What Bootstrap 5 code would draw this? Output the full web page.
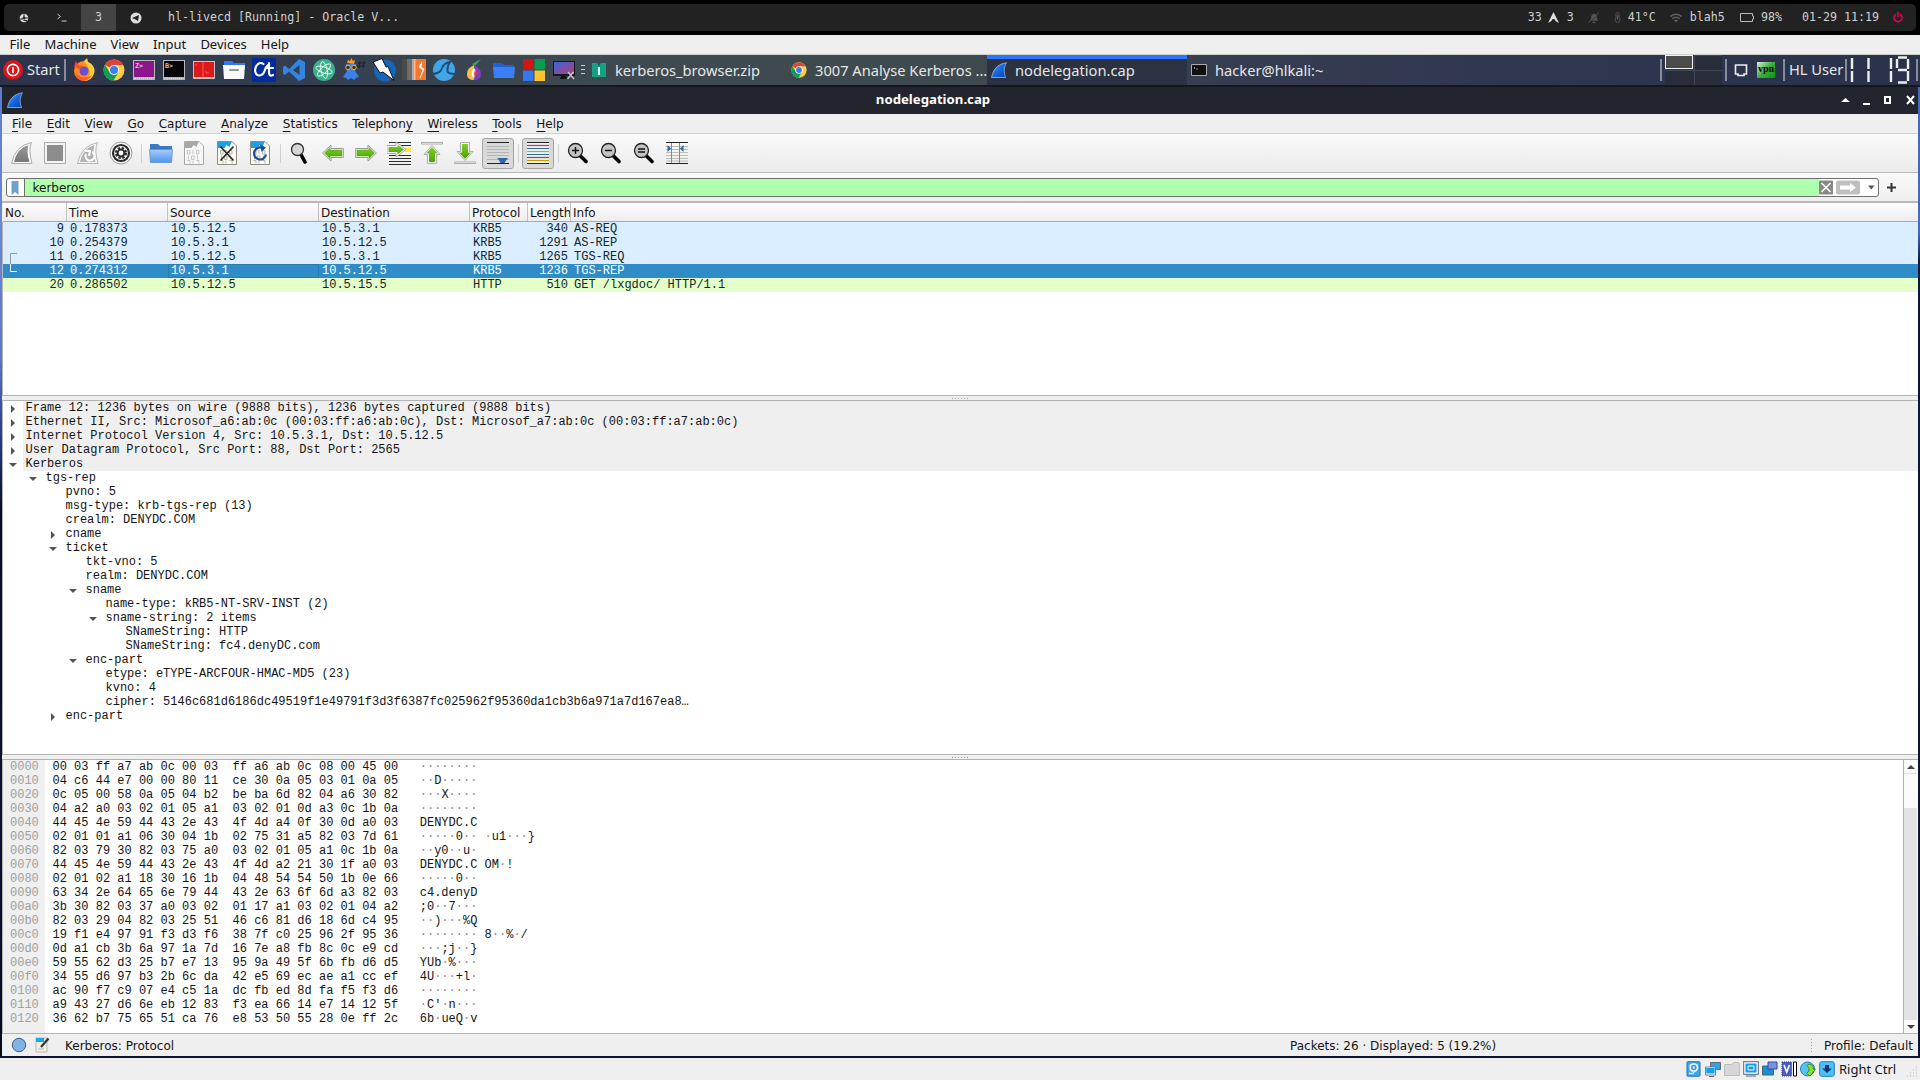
<!DOCTYPE html>
<html lang="en">
<head>
<meta charset="utf-8">
<title>nodelegation.cap</title>
<link rel="stylesheet" href="https://cdn.jsdelivr.net/npm/bootstrap@5.3.0/dist/css/bootstrap.min.css">
<style>
body{width:1920px;height:1080px;overflow:hidden;background:#efefef;color:#141414;font-family:"DejaVu Sans",sans-serif;font-size:12px;line-height:14px}
svg{display:block;flex:none}
.host-bar{height:35px;background:#000;padding:4px 4px;font:11.65px/27px "DejaVu Sans Mono",monospace;color:#d0d0d0}
.host-inner{background:#222;height:27px;border-radius:5px;white-space:pre}
.ws{width:39px;height:27px;flex:none}
.ws-term{width:38px}
.ws-on{background:#444;width:35px}
.vb-menu{height:20px;border-bottom:1px solid #ccd0cc;background:#efefef;font:13px/19px "Noto Sans",sans-serif;padding-left:9.5px}
.vb-menu span{margin-right:14.1px}
.taskbar{height:30px;background:linear-gradient(90deg,#2c334b 0,#333d50 14%,#3e4a50 32%,#3f4a4e 50%,#363d50 64%,#2f3750 80%,#29314b 100%);font:14.67px/28px "Noto Sans",sans-serif;color:#e6e6e6}
.task{width:200px;height:30px;padding:0 0 1px 4px;white-space:pre}
.task svg{margin-right:8px}
.task-on{background:#2b3242;box-shadow:inset 0 4px #2777ff}
.tlabel{padding-bottom:2px}
.vsep{width:2px;height:22px;background:#858b97;flex:none}
.pager{width:57px;height:30px;display:grid;grid-template-columns:29px 28px;grid-template-rows:15px 15px;gap:0}
.pager i{background:#292d3a;border-left:1px solid #41475a;border-top:1px solid #41475a}
.pager i.cur{background:#4b4b4b;border:1px solid #f2f2ee;height:14px;width:28px}
.pager i:nth-child(3){border-left:0}
.vpn{width:18px;height:16px;background:linear-gradient(135deg,#d9f0d9,#3eae3e 50%,#069806);color:#000;font:bold 10px/14px "Liberation Serif",serif}
.frame-l{width:2px;background:linear-gradient(#5a7bd0 0,#6a88d2 14%,#5a77c4 28%,#2a4590 35%,#040b24 44%,#0a1330 75%,#040a1c)}
.frame-r{width:2px;background:linear-gradient(#4568c0 0,#4568c0 15%,#0c1740 18%,#0a1330)}
.win{height:971px;border-top:2px solid #15171c}
.win-title{height:27px;background:#23252e;color:#fff;font:bold 13.2px/25px "Noto Sans",sans-serif;padding-bottom:2px}
.w-menu{height:20px;line-height:20px;border-bottom:1px solid #d2d2d2;padding-left:10px}
.w-menu span{margin-right:14.55px}
.w-menu u{text-underline-offset:3px}
.tools{height:39px;background:linear-gradient(#fafafa,#ebebeb);border-bottom:1px solid #b8b8b8;padding-left:4px}
.tb{width:33px;height:32px;flex:none;padding-right:1px}
.tb-on{background:#d9d9d9;border:1px solid #a5a5a5;border-radius:3px;width:32px;height:31px;margin-right:1px;padding:0}
.tsep{width:7px;height:19px;flex:none;background:linear-gradient(#cfcfcf,#cfcfcf) 3px 0/1px 19px no-repeat}
.filter{height:30px;background:linear-gradient(#fafafa,#efefef);border-bottom:2px solid #b9b9b9;padding:5px 0 4px 4px}
.fbox{width:1873px;height:19px;border:1px solid #6f6f6f;border-radius:3px;background:#fff;overflow:hidden}
.fgreen{background:#afffaf;border-left:1px solid #6f6f6f;height:17px;line-height:18px;padding-left:7.5px;width:1795px;margin-left:17px}
.cols{display:flex;padding-left:1px}
.cols>*{flex:none;padding:0 3px;overflow:hidden;white-space:pre}
.cols>:nth-child(1){width:63px}.cols>:nth-child(2){width:101px}.cols>:nth-child(3),.cols>:nth-child(4){width:151px}
.cols>:nth-child(5){width:58px}.cols>:nth-child(6){width:43px}.cols>:nth-child(7){flex:1}
.chead{height:19px;line-height:20px;background:linear-gradient(#fdfdfd,#ededed);border-bottom:1px solid #a9a9a9}
.chead>*{border-right:1px solid #c2c2c2;padding:0 0 0 2px}
.chead>:nth-child(1){width:64px}.chead>:nth-child(7){border:0}.cols.chead{padding-left:0;margin-left:1px}
.mono,.pkt{font-family:"Liberation Mono",monospace;font-size:12px;line-height:14px}
.pkt{height:14px;background:#daeeff;color:#12272e;padding-left:0}
.pkt>:nth-child(1),.pkt>:nth-child(6){text-align:right}
.pkt>:nth-child(1){width:64px;position:relative}
.pkt.sel{background:#308cc6;color:#fff}.pkt.http{background:#e4ffc7}
.pkt.sel>:nth-child(3){box-shadow:inset 0 0 0 1px #2a7cb0}
.list{height:173px;border-left:1px solid #b5b5b5;background:#fff}
.split{border-top:1px solid #b4b4b4;border-bottom:1px solid #b4b4b4;height:6px;background:#efefef}
.split i{width:16px;height:1px;background:repeating-linear-gradient(90deg,#aaa 0 1px,transparent 1px 3px)}
.tree{height:353px;background:#fff;border-left:1px solid #b5b5b5}
.nd{height:14px}
.nd b{width:20px;height:14px;flex:none;display:flex;align-items:center;justify-content:center}
.nd b.c::before{content:"";border:4px solid transparent;border-left:4px solid #555;border-right:0;margin-top:1px}
.nd b.o::before{content:"";border:4px solid transparent;border-top:4px solid #555;border-bottom:0;margin-top:2px}
.nd span{padding-left:2.5px;flex:1;white-space:nowrap}
.nd.top span{background:#efefef}
.d1{padding-left:20px}.d2{padding-left:40px}.d3{padding-left:60px}.d4{padding-left:80px}.d5{padding-left:100px}
.hex{height:273px;background:#fff;border-left:1px solid #b5b5b5}
.offs{width:42px;background:#efefef;color:#a0a0a0;padding-left:7px;white-space:pre}
.bytes{padding-left:7.5px;color:#141414;white-space:pre}.bytes em{font-style:normal;color:#8c8c8c}
.sb{width:14px;border-left:1px solid #b4b4b4;background:#e3e3e3}
.sb-b{height:14px;background:#fbfbfb}
.status{height:23px;border-top:1px solid #b4b4b4;line-height:22px}
.status span{padding-top:1px}
.dotsep{width:1px;height:13px;background:repeating-linear-gradient(#aaa 0 1px,transparent 1px 3px)}
.vb-status{height:24px;border-top:2px solid #0a142c;font:13px/22px "Noto Sans",sans-serif;padding:0 2px 0 1684px}
</style>
<script src="https://cdn.jsdelivr.net/npm/bootstrap@5.3.0/dist/js/bootstrap.bundle.min.js"></script>
</head>
<body>
<svg width="0" height="0" class="position-absolute">
<defs>
<linearGradient id="gf" x1="0" y1="0" x2="1" y2="1"><stop offset="0" stop-color="#6db0ff"/><stop offset=".5" stop-color="#1668e0"/><stop offset="1" stop-color="#0b3fae"/></linearGradient>
<linearGradient id="gg" x1="0" y1="0" x2="0" y2="1"><stop offset="0" stop-color="#7fd02a"/><stop offset="1" stop-color="#4ba300"/></linearGradient>
<linearGradient id="gs" x1="0" y1="0" x2="0" y2="1"><stop offset="0" stop-color="#9a9a9a"/><stop offset="1" stop-color="#777"/></linearGradient>
<linearGradient id="go" x1="0" y1="0" x2="0" y2="1"><stop offset="0" stop-color="#a9cdf8"/><stop offset="1" stop-color="#4f94ee"/></linearGradient>
<linearGradient id="gm" x1="0" y1="0" x2="1" y2="1"><stop offset="0" stop-color="#3d63d8"/><stop offset="1" stop-color="#b0407a"/></linearGradient>
<symbol id="fin" viewBox="0 0 16 16"><path d="M.5 15.5C2 8 6 2 15.5.8 12.800 5 12.600 10 14.500 15.500Z" fill="url(#gf)" stroke="#9fb6d6" stroke-width=".8"/></symbol>
<symbol id="chrome" viewBox="0 0 22 22"><circle cx="11" cy="11" r="10.500" fill="#fc4"/><path d="M11 11 1.900 5.800A10.500 10.500 0 0 1 20.200 6H11Z" fill="#dc4437"/><path d="M1.900 5.700A10.500 10.500 0 0 0 10.500 21.500L15.300 13.500 6.700 13.500Z" fill="#109d58"/><circle cx="11" cy="11" r="5" fill="#fff"/><circle cx="11" cy="11" r="4" fill="#3b7ded"/></symbol>
<symbol id="lens" viewBox="0 0 22 22"><path d="m12.500 13 6.500 6.500" stroke="#000" stroke-width="3.600" stroke-linecap="round"/><circle cx="8.500" cy="8.500" r="7" fill="#c4c4c4" stroke="#222" stroke-width="1.300"/></symbol>
<symbol id="arr" viewBox="0 0 22 22"><path d="M.6 11 9 3V6.500H21.300V15.500H9V19Z" fill="#fff" stroke="#999" stroke-width="1"/><path d="M2.500 11 8 5.500V8H20V14H8V16.500Z" fill="url(#gg)" stroke="#57a312" stroke-width=".6"/></symbol>
<symbol id="doc" viewBox="0 0 20 24"><path d="M.5.5H15L19.500 5V23.500H.5Z" fill="#fcfbef" stroke="#8b8b84"/><path d="M1 1h13.500l-2 5-3-2-2 3H1Z" fill="#1f9fe0"/><path d="M3.500 9.500h2.500v3.500H3.500zM9 9v4M12.500 9.500h2.500v3.500h-2.500zM4.500 14.500v4M7.500 15h2.500v3.500H7.500zM13.500 14.500v4M3.500 19.500h2.500v3M9 19.500v3M12.500 19.500h2.500v3" fill="none" stroke="#b5b5ab"/></symbol>
</defs>
</svg>

<!-- host status bar -->
<header class="host-bar"><div class="host-inner d-flex align-items-center">
<div class="ws d-flex align-items-center justify-content-center"><svg width="10" height="10" viewBox="0 0 10 10"><circle cx="5" cy="5" r="4.300" fill="#ddd"/><path d="M1 6h3M5 1v4H9M4.500 7.500H8" stroke="#222" fill="none"/><circle cx="5" cy="5" r="1.500" fill="#222"/></svg></div>
<div class="ws ws-term d-flex align-items-center justify-content-center"><svg width="12" height="9" viewBox="0 0 12 9"><path d="m1.500 1 3 2.500-3 2.500M5.500 8h5" stroke="#ccc" fill="none"/></svg></div>
<div class="ws ws-on text-center">3</div>
<div class="ws d-flex align-items-center justify-content-center"><svg width="12" height="12" viewBox="0 0 12 12"><circle cx="6" cy="6" r="5.500" fill="#ddd"/><path d="M2 6 9 3 8 9 5.500 7.500Z" fill="#222"/></svg></div>
<span class="flex-grow-1" style="padding-left:13px">hl-livecd [Running] - Oracle V...</span>
<span>33</span><svg style="margin:0 8px 0 6px" width="11" height="11" viewBox="0 0 11 11"><path d="M5.500 0 11 11 7.500 9A2 2 0 0 0 3.500 9L0 11Z" fill="#ddd"/></svg><span>3</span>
<svg style="margin-left:14px" width="12" height="12" viewBox="0 0 13 12"><path d="M2 9 3.500 6.500Q3 2 6.500 1.500 10 2 9.500 6.500L11 9ZM5 10h3v1.500H5Z" fill="#555"/><path d="M1 11.500 12.500.500" stroke="#222"/><path d="M.500 11 12 0" stroke="#5c5c5c"/></svg>
<svg style="margin-left:14px" width="7" height="11" viewBox="0 0 7 11"><path d="M2 6V2a1.500 1.500 0 0 1 3 0V6a2.500 2.500 0 1 1-3 0ZM3.500 3V8" fill="none" stroke="#555"/></svg><span style="margin-left:7px">41°C</span>
<svg style="margin-left:14px" width="12" height="10" viewBox="0 0 12 10"><path d="M.500 3.500q5.500-4.500 11 0M2.300 5.700q3.700-3 7.400 0" fill="none" stroke="#606060" stroke-width="1.400"/><path d="M4 7.300q2-1.300 4 0L6 9.500Z" fill="#606060"/></svg><span style="margin-left:8px">blah5</span>
<svg style="margin-left:15px" width="14" height="9" viewBox="0 0 14 9"><path d="M.500.500H12.500V3H13.500V6H12.500V8.500H.500Z" fill="none" stroke="#bbb"/></svg><span style="margin-left:7px">98%</span>
<span style="margin-left:20px">01-29 11:19</span>
<svg style="margin:0 13px 0 14px" width="10" height="11" viewBox="0 0 10 11"><path d="M3 2.200a4 4 0 1 0 4 0M5 0V5" fill="none" stroke="#e6005c" stroke-width="1.500"/></svg>
</div></header>

<nav class="vb-menu d-flex"><span>File</span><span>Machine</span><span>View</span><span>Input</span><span>Devices</span><span>Help</span></nav>

<!-- guest panel -->
<div class="taskbar d-flex align-items-center">
<svg style="margin:0 4px 0 3px" width="20" height="20" viewBox="0 0 20 20"><circle cx="10" cy="10" r="10" fill="#d8161b"/><circle cx="10" cy="10" r="5.600" fill="none" stroke="#fff" stroke-width="1.600"/><path d="M10 7v6" stroke="#fff" stroke-width="1.600"/></svg><span class="tlabel" style="width:37px">Start</span><i class="vsep"></i>
<div class="d-flex align-items-center" style="margin-left:6px;gap:6px;width:508px">
<svg width="24" height="24" viewBox="0 0 24 24"><circle cx="12" cy="13" r="10" fill="#ff8a1e"/><path d="M12 3 15 0l1 4q7 3 6.500 10Q20 23 12 23q9-6 4-14Z" fill="#ffcf3b"/><path d="M2 9 4 3l2 4 5 1-3 3Z" fill="#ff4a3b"/><circle cx="12" cy="13" r="4.500" fill="#6a4fd0"/><path d="M3 15q8 8 17 2-4 6-9 6-6-1-8-8Z" fill="#ff5a2e"/></svg>
<svg width="24" height="24" viewBox="0 0 24 24"><use href="#chrome" x="1" y="1" width="22" height="22"/></svg>
<svg width="24" height="24" viewBox="0 0 24 24"><path d="M1 2h22v20H1z" fill="#b8b8b8"/><path d="M2 3h20v16H2z" fill="#8b168b"/><path d="M3 20.500h18" stroke="#ddd" stroke-dasharray="1 1"/><text x="3" y="10" font-size="6.500" fill="#fff" font-family="DejaVu Sans Mono">Z&gt;</text></svg>
<svg width="24" height="24" viewBox="0 0 24 24"><path d="M1 2h22v20H1z" fill="#b8b8b8"/><path d="M2 3h20v16H2z" fill="#05050a"/><path d="M3 20.500h18" stroke="#ddd" stroke-dasharray="1 1"/><text x="3" y="10" font-size="6.500" fill="#fff" font-family="DejaVu Sans Mono">B&gt;</text></svg>
<svg width="24" height="24" viewBox="0 0 24 24"><path d="M1 3h22v18H1z" fill="#c9c0bd"/><path d="M2 4h20v15H2z" fill="#dc1a1c"/><path d="M4 6v2M14 13v2h3M11 4v15" stroke="#ff7770" stroke-width=".7" fill="none"/></svg>
<svg width="24" height="24" viewBox="0 0 24 24"><path d="M2 3h8l2 2h11v6H2z" fill="#3478f0"/><path d="M1 7h22l-1 14H2z" fill="#fafafa"/><path d="M8 12h8" stroke="#999" stroke-width="2" stroke-linecap="round"/></svg>
<svg width="24" height="24" viewBox="0 0 24 24"><path d="M0 0h24v24H0z" fill="#002b9c"/><path d="M11.500 6Q9 4 6 6 3 8.500 3 12.500 3.500 17 7 17.500 11 17.500 12.500 13 13.500 9 16 7M17 5V15q.500 4 4 2M14 10h7" fill="none" stroke="#fff" stroke-width="2.200" stroke-linecap="round"/></svg>
<svg width="24" height="24" viewBox="0 0 24 24"><path d="M17 1 23 4V20L17 23 7 13.500 3 17 1 15.500V9L3 7.500 7 11ZM17.500 7 11 12l6.500 5Z" fill="#3583e0" fill-rule="evenodd"/></svg>
<svg width="24" height="24" viewBox="0 0 24 24"><circle cx="12" cy="12" r="11" fill="#3fae8a"/><g fill="none" stroke="#e8fff6" stroke-width=".9"><ellipse cx="12" cy="12" rx="3" ry="8.500" transform="rotate(-12 12 12)"/><ellipse cx="12" cy="12" rx="3" ry="8.500" transform="rotate(48 12 12)"/><ellipse cx="12" cy="12" rx="3" ry="8.500" transform="rotate(-72 12 12)"/></g></svg>
<svg width="24" height="24" viewBox="0 0 24 24"><path d="M5 5 6 2l2 1 1.500-3 1.500 3 2-1-1 4Z" fill="#ff9a1f"/><path d="M4 6h10l-1 7 4 6-3 1-2 2-3-2-3 2-2-2-3-1 4-6Z" fill="#3c7fe8"/><circle cx="6" cy="9.500" r="2.300" fill="#333" stroke="#f5b92a"/><circle cx="12" cy="9.500" r="2.300" fill="#333" stroke="#f5b92a"/><path d="m18 3-1 7M22 3l-1 7M16 5h8M15 8h8" stroke="#222"/></svg>
<svg width="24" height="24" viewBox="0 0 24 24"><circle cx="13" cy="12.500" r="11" fill="#1565b8"/><path d="M1 4 10 .500 14 9l2-.500 6 14L11 14 8 15Z" fill="#fff" stroke="#111"/></svg>
<svg width="24" height="24" viewBox="0 0 24 24"><path d="M0 1h11v21H0z" fill="#6e6e6e"/><path d="M0 1h5v21H0z" fill="#4b4b4b"/><path d="M13 1h11v21H13z" fill="#f27a2e"/><path d="M10 1h2v21h-2z" fill="#aaa"/><path d="M12 1h1.500v21H12z" fill="#fbb78a"/><path d="m20 4-3 5 4 3-3 8 4-9-3-2Z" fill="#fff" stroke="#fff" stroke-width=".6"/></svg>
<svg width="24" height="24" viewBox="0 0 24 24"><circle cx="12" cy="12" r="11" fill="#42a5e6"/><path d="M1 16Q9 15 10 10 12 5 18 4 15 8 15.500 13q.500 3 7.500 3" fill="none" stroke="#1c4d78" stroke-width="1.800"/></svg>
<svg width="24" height="24" viewBox="0 0 24 24"><path d="m13 8 6-7-9 5Z" fill="#27ae60"/><path d="M12 7Q5 10 5 16q0 6 7 6Z" fill="#f5c242"/><path d="M12 7q7 3 7 9 0 6-7 6Z" fill="#7a41b8"/><path d="M12 10q-3 3-2 8l2 2 2-7Z" fill="#fff"/><path d="m13 11 1 3 3 1-3 1-1 3-1-3Z" fill="#f33"/></svg>
<svg width="24" height="24" viewBox="0 0 24 24"><path d="M1 5h9l2 2h10v3H1z" fill="#2360d8"/><path d="M1 9h22l-1 11H2z" fill="#3a7ff5"/></svg>
<svg width="24" height="24" viewBox="0 0 24 24"><path d="M1 1h10.500v10.500H1z" fill="#d01717"/><path d="M12.500 1H23v10.500H12.500z" fill="#0a9d50"/><path d="M1 12.500h10.500V23H1z" fill="#3478f0"/><path d="M12.500 12.500H23V23H12.500z" fill="#ffc42b"/></svg>
<svg width="24" height="24" viewBox="0 0 24 24"><path d="M1 3h22v15H1z" fill="#15181f"/><path d="M2 4h20v12H2z" fill="url(#gm)"/><path d="M9 18h5l1 3H8z" fill="#111"/><path d="m16 14 6 7m-.500-7-6 7" stroke="#ccc" stroke-width="1.300"/></svg>
</div>
<svg width="7" height="12" viewBox="0 0 7 12"><path d="M1 1.500h4M1 5.500h4M1 9.500h4" stroke="#ccc"/></svg>
<div class="task d-flex align-items-center"><svg width="16" height="16" viewBox="0 0 16 16"><path d="M1 1h14v14H1z" fill="#16a085"/><path d="M6 1h4L8 5Z" fill="#0c6b58"/><path d="M8 5v8" stroke="#d9fff4" stroke-width="2"/></svg>kerberos_browser.zip</div>
<div class="task d-flex align-items-center"><svg width="16" height="16"><use href="#chrome" width="16" height="16"/></svg>3007 Analyse Kerberos ...</div>
<div class="task task-on d-flex align-items-center"><svg width="16" height="16"><use href="#fin" width="16" height="16"/></svg>nodelegation.cap</div>
<div class="task d-flex align-items-center flex-grow-1"><svg width="16" height="16" viewBox="0 0 16 16"><path d="M.500 2.500h15v11H.500z" fill="#111" stroke="#aaa"/><path d="m3 5 1 1-1 1M5 7h2" stroke="#aaa" stroke-width=".8" fill="none"/></svg>hacker@hlkali:~</div>
<i class="vsep" style="margin-right:3px"></i>
<div class="pager"><i class="cur"></i><i></i><i></i><i></i></div>
<i class="vsep" style="margin:0 7px 0 3px"></i>
<svg width="14" height="14" viewBox="0 0 14 14"><path d="M1.500 2H12.500V11H10V12.500H4V11H1.500Z" fill="none" stroke="#eee" stroke-width="1.600"/></svg>
<div class="vpn text-center" style="margin:0 8px 0 9px">vpn</div>
<i class="vsep" style="margin-right:4px"></i><span class="tlabel text-nowrap" style="width:56px">HL User</span><i class="vsep"></i>
<svg style="margin:0 5px 0 3px" width="61" height="28" viewBox="0 0 61 28"><g stroke="#eee" stroke-width="2.400"><path d="M2 2v11M2 15v11M18.500 2v11M18.500 15v11M41 2v11M41 15v11M47 3v9M58 3v10M58 15v10M48 1.500h9M48 14h9M48 26.500h9"/></g></svg>
<i class="vsep" style="margin-right:2px"></i>
</div>

<div class="win d-flex">
<div class="frame-l"></div>
<main class="flex-grow-1">
<div class="win-title d-flex align-items-center">
<svg style="margin-left:5px" width="16" height="16"><use href="#fin" width="16" height="16"/></svg><span class="flex-grow-1 text-center" style="padding-left:5px">nodelegation.cap</span>
<svg style="margin-right:2px" width="78" height="14" viewBox="0 0 78 14"><path d="m3 9 4.500-4L12 9Z" fill="#fff"/><path d="M25 11h7" stroke="#fff" stroke-width="2"/><path d="M47 4h5v6h-5z" fill="none" stroke="#fff" stroke-width="2"/><path d="m69 3 7 8m0-8-7 8" stroke="#fff" stroke-width="2"/></svg>
</div>
<nav class="w-menu d-flex"><span><u>F</u>ile</span><span><u>E</u>dit</span><span><u>V</u>iew</span><span><u>G</u>o</span><span><u>C</u>apture</span><span><u>A</u>nalyze</span><span><u>S</u>tatistics</span><span>Telephon<u>y</u></span><span><u>W</u>ireless</span><span><u>T</u>ools</span><span><u>H</u>elp</span></nav>

<div class="tools d-flex align-items-center">
<div class="tb d-flex align-items-center justify-content-center"><svg width="22" height="22" viewBox="0 0 22 22"><path d="M.500 21.500Q4 4 20.500.500 17 8 21 21.500Z" fill="#fff" stroke="#aaa"/><path d="M3 20Q6 6 17.500 3 15 9 18.500 20Z" fill="url(#gs)"/></svg></div>
<div class="tb d-flex align-items-center justify-content-center"><svg width="22" height="22" viewBox="0 0 22 22"><path d="M.500.500h21v21H.500z" fill="#f4f4f4" stroke="#aaa"/><path d="M3 3h16v16H3z" fill="#8c8c8c"/></svg></div>
<div class="tb d-flex align-items-center justify-content-center"><svg width="22" height="22" viewBox="0 0 22 22"><path d="M.500 21.500Q4 4 20.500.500 17 8 21 21.500Z" fill="#f6f6f6" stroke="#b5b5b5"/><path d="M3 20Q6 6 17.500 3 15 9 18.500 20Z" fill="#b2b2b2"/><path d="M9 12a4.500 4.500 0 1 0 6-2M8 9l5 0-1 5" fill="none" stroke="#fff" stroke-width="2"/></svg></div>
<div class="tb d-flex align-items-center justify-content-center"><svg width="24" height="24" viewBox="0 0 24 24"><circle cx="12" cy="12" r="11" fill="#f8f8f8" stroke="#999"/><circle cx="12" cy="12" r="8" fill="none" stroke="#2c2c2c" stroke-width="2.200"/><circle cx="12" cy="12" r="4.800" fill="none" stroke="#2c2c2c" stroke-width="2.600" stroke-dasharray="2.300 1.470"/><circle cx="12" cy="12" r="3.400" fill="none" stroke="#2c2c2c" stroke-width="2"/></svg></div>
<i class="tsep"></i>
<div class="tb d-flex align-items-center justify-content-center"><svg width="24" height="20" viewBox="0 0 24 20"><path d="M1 1h8l2 2h12v4H1z" fill="#3b78c8"/><path d="M.500 6.500h23L22.500 19.500H1.500z" fill="url(#go)" stroke="#5c90d8" stroke-width=".8"/></svg></div>
<div class="tb d-flex align-items-center justify-content-center"><svg width="20" height="24" style="filter:grayscale(1);opacity:.7"><use href="#doc" width="20" height="24"/></svg></div>
<div class="tb d-flex align-items-center justify-content-center"><svg width="20" height="24" viewBox="0 0 20 24"><use href="#doc" width="20" height="24"/><path d="m3.500 5.500 13 14m0-14-13 14" stroke="#2b2b2b" stroke-width="1.800"/></svg></div>
<div class="tb d-flex align-items-center justify-content-center"><svg width="20" height="24" viewBox="0 0 20 24"><use href="#doc" width="20" height="24"/><path d="M12 6.800a6 6 0 1 0 4 6.700" fill="none" stroke="#1d4f96" stroke-width="2.200"/><path d="m10 3.500 6 3-4.500 4.500Z" fill="#1d4f96"/></svg></div>
<i class="tsep"></i>
<div class="tb d-flex align-items-center justify-content-center"><svg width="22" height="22" viewBox="0 0 22 22"><path d="m12.500 13.500 3.500 6.500" stroke="#000" stroke-width="3.600" stroke-linecap="round"/><circle cx="8.500" cy="7.500" r="6" fill="#d6d6d6" stroke="#333" stroke-width="1.300"/></svg></div>
<div class="tb d-flex align-items-center justify-content-center"><svg width="22" height="22"><use href="#arr" width="22" height="22"/></svg></div>
<div class="tb d-flex align-items-center justify-content-center"><svg width="22" height="22" viewBox="0 0 22 22"><use href="#arr" width="22" height="22" transform="matrix(-1 0 0 1 22 0)"/></svg></div>
<div class="tb d-flex align-items-center justify-content-center"><svg width="24" height="24" viewBox="0 0 24 24"><path d="M2 1.500h22M2 4.500h22M2 14.500h22M2 17.500h22M2 20.500h22M2 23.500h22" stroke="#2d2f31" stroke-width="1.200"/><path d="M18 7h6v4h-6z" fill="#ffe14a"/><path d="M0 4.500h9V1l10 7.500L9 16V12.500H0Z" fill="#fff" stroke="#999" stroke-width=".8"/><path d="M1.500 6h9V3.500l6.500 5-6.500 5V11h-9Z" fill="url(#gg)"/></svg></div>
<div class="tb d-flex align-items-center justify-content-center"><svg width="22" height="22" viewBox="0 0 22 22"><path d="M.500.500h21v1.500H.500z" fill="#fff" stroke="#999" stroke-width=".8"/><path d="M11 3.500 3 12.500H6.500V21.500H15.500V12.500H19Z" fill="#fff" stroke="#999" stroke-width=".8"/><path d="M11 5 5 11.500H8V20H14V11.500H17Z" fill="url(#gg)"/></svg></div>
<div class="tb d-flex align-items-center justify-content-center"><svg width="22" height="22" viewBox="0 0 22 22"><path d="M.500 20h21v1.500H.500z" fill="#fff" stroke="#999" stroke-width=".8"/><path d="M11 18.500 3 9.500H6.500V.500H15.500V9.500H19Z" fill="#fff" stroke="#999" stroke-width=".8"/><path d="M11 17 5 10.500H8V2H14V10.500H17Z" fill="url(#gg)"/></svg></div>
<div class="tb tb-on d-flex align-items-center justify-content-center"><svg width="22" height="22" viewBox="0 0 22 22"><path d="M0 .500h22M0 21.500h22" stroke="#222"/><path d="M0 4.500h22M0 7.500h22M0 10.500h22M0 13.500h22M0 17.500h22" stroke="#b3b5b1"/><path d="M10 16h11q-2 2-3.500 5h-4q-1-3-3.500-5" fill="#3465a4"/></svg></div>
<i class="tsep"></i>
<div class="tb tb-on d-flex align-items-center justify-content-center"><svg width="22" height="22" viewBox="0 0 22 22"><path d="M0 0h22v22H0z" fill="#f0f0f0"/><g stroke-width="1.200"><path d="M0 .500h22M0 21.500h22" stroke="#222"/><path d="M0 3.500h22" stroke="#ef2929"/><path d="M0 6.500h22M0 12.500h22" stroke="#3465a4"/><path d="M0 9.500h22" stroke="#73d216"/><path d="M0 15.500h22" stroke="#75507b"/><path d="M0 18.500h22" stroke="#c4a000"/></g></svg></div>
<i class="tsep"></i>
<div class="tb d-flex align-items-center justify-content-center"><svg width="22" height="22" viewBox="0 0 22 22"><use href="#lens" width="22" height="22"/><path d="M5 8.500h7M8.500 5v7" stroke="#111" stroke-width="1.400"/></svg></div>
<div class="tb d-flex align-items-center justify-content-center"><svg width="22" height="22" viewBox="0 0 22 22"><use href="#lens" width="22" height="22"/><path d="M5 8.500h7" stroke="#111" stroke-width="1.400"/></svg></div>
<div class="tb d-flex align-items-center justify-content-center"><svg width="22" height="22" viewBox="0 0 22 22"><use href="#lens" width="22" height="22"/><path d="M5 7h7M5 10h7" stroke="#111" stroke-width="1.300"/></svg></div>
<div class="tb d-flex align-items-center justify-content-center"><svg width="22" height="22" viewBox="0 0 22 22"><path d="M0 4.500h22M0 7.500h22M0 10.500h22M0 13.500h22M0 16.500h22M0 19h22" stroke="#babdb6"/><path d="M0 .500h22M0 21.500h22" stroke="#222"/><path d="M5.500 1v20M13.500 1v20" stroke="#888"/><path d="M1.500 3v7l3.500-3.500ZM17.500 3v7L14 6.500Z" fill="#3465a4"/></svg></div>
</div>

<div class="filter d-flex align-items-center">
<div class="fbox d-flex align-items-center">
<svg class="position-absolute" style="margin-left:4px" width="8" height="14" viewBox="0 0 8 14"><path d="M.500 0h7v14L4 11 .500 14Z" fill="#729fcf"/></svg>
<div class="fgreen">kerberos</div>
<svg width="58" height="15" viewBox="0 0 58 15"><rect x="0" y=".500" width="14" height="14" rx="1" fill="#888a85"/><path d="m2.500 3 9 9m0-9-9 9" stroke="#fff" stroke-width="1.500"/><rect x="17" y=".500" width="24" height="14" rx="2" fill="#bfbfbf"/><path d="M21 5.500h10V3l6 4.500L31 12V9.500H21Z" fill="#fff"/><path d="M49 5.500h6.500l-3.250 4Z" fill="#555"/></svg>
</div>
<svg style="margin-left:8px" width="9" height="9" viewBox="0 0 9 9"><path d="M4.500 0v9M0 4.500h9" stroke="#333" stroke-width="2"/></svg>
</div>

<div class="cols chead"><span>No.</span><span>Time</span><span>Source</span><span>Destination</span><span>Protocol</span><span>Length</span><span>Info</span></div>
<div class="list">
<div class="cols pkt"><span>9</span><span>0.178373</span><span>10.5.12.5</span><span>10.5.3.1</span><span>KRB5</span><span>340</span><span>AS-REQ</span></div>
<div class="cols pkt"><span>10</span><span>0.254379</span><span>10.5.3.1</span><span>10.5.12.5</span><span>KRB5</span><span>1291</span><span>AS-REP</span></div>
<div class="cols pkt"><span><svg class="position-absolute" style="left:7px;top:0" width="8" height="14"><path d="M7 7.500H.500V14" transform="translate(0 -4)" fill="none" stroke="#8a9aa5"/><path d="M.500 9V14" stroke="#8a9aa5"/></svg>11</span><span>0.266315</span><span>10.5.12.5</span><span>10.5.3.1</span><span>KRB5</span><span>1265</span><span>TGS-REQ</span></div>
<div class="cols pkt sel"><span><svg class="position-absolute" style="left:7px;top:0" width="8" height="14"><path d="M7 7.500H.500V0" fill="none" stroke="#fff"/></svg>12</span><span>0.274312</span><span>10.5.3.1</span><span>10.5.12.5</span><span>KRB5</span><span>1236</span><span>TGS-REP</span></div>
<div class="cols pkt http"><span>20</span><span>0.286502</span><span>10.5.12.5</span><span>10.5.15.5</span><span>HTTP</span><span>510</span><span>GET /lxgdoc/ HTTP/1.1</span></div>
</div>
<div class="split d-flex align-items-center justify-content-center"><i></i></div>

<div class="tree mono">
<div class="nd top d-flex"><b class="c"></b><span>Frame 12: 1236 bytes on wire (9888 bits), 1236 bytes captured (9888 bits)</span></div>
<div class="nd top d-flex"><b class="c"></b><span>Ethernet II, Src: Microsof_a6:ab:0c (00:03:ff:a6:ab:0c), Dst: Microsof_a7:ab:0c (00:03:ff:a7:ab:0c)</span></div>
<div class="nd top d-flex"><b class="c"></b><span>Internet Protocol Version 4, Src: 10.5.3.1, Dst: 10.5.12.5</span></div>
<div class="nd top d-flex"><b class="c"></b><span>User Datagram Protocol, Src Port: 88, Dst Port: 2565</span></div>
<div class="nd top d-flex"><b class="o"></b><span>Kerberos</span></div>
<div class="nd d-flex d1"><b class="o"></b><span>tgs-rep</span></div>
<div class="nd d-flex d2"><b></b><span>pvno: 5</span></div>
<div class="nd d-flex d2"><b></b><span>msg-type: krb-tgs-rep (13)</span></div>
<div class="nd d-flex d2"><b></b><span>crealm: DENYDC.COM</span></div>
<div class="nd d-flex d2"><b class="c"></b><span>cname</span></div>
<div class="nd d-flex d2"><b class="o"></b><span>ticket</span></div>
<div class="nd d-flex d3"><b></b><span>tkt-vno: 5</span></div>
<div class="nd d-flex d3"><b></b><span>realm: DENYDC.COM</span></div>
<div class="nd d-flex d3"><b class="o"></b><span>sname</span></div>
<div class="nd d-flex d4"><b></b><span>name-type: kRB5-NT-SRV-INST (2)</span></div>
<div class="nd d-flex d4"><b class="o"></b><span>sname-string: 2 items</span></div>
<div class="nd d-flex d5"><b></b><span>SNameString: HTTP</span></div>
<div class="nd d-flex d5"><b></b><span>SNameString: fc4.denyDC.com</span></div>
<div class="nd d-flex d3"><b class="o"></b><span>enc-part</span></div>
<div class="nd d-flex d4"><b></b><span>etype: eTYPE-ARCFOUR-HMAC-MD5 (23)</span></div>
<div class="nd d-flex d4"><b></b><span>kvno: 4</span></div>
<div class="nd d-flex d4"><b></b><span>cipher: 5146c681d6186dc49519f1e49791f3d3f6387fc025962f95360da1cb3b6a971a7d167ea8…</span></div>
<div class="nd d-flex d2"><b class="c"></b><span>enc-part</span></div>
</div>
<div class="split d-flex align-items-center justify-content-center"><i></i></div>

<div class="hex d-flex">
<div class="offs mono">0000
0010
0020
0030
0040
0050
0060
0070
0080
0090
00a0
00b0
00c0
00d0
00e0
00f0
0100
0110
0120</div>
<div class="bytes mono flex-grow-1" id="bytes">00 03 ff a7 ab 0c 00 03  ff a6 ab 0c 08 00 45 00   ········
04 c6 44 e7 00 00 80 11  ce 30 0a 05 03 01 0a 05   ··D·····
0c 05 00 58 0a 05 04 b2  be ba 6d 82 04 a6 30 82   ···X····
04 a2 a0 03 02 01 05 a1  03 02 01 0d a3 0c 1b 0a   ········
44 45 4e 59 44 43 2e 43  4f 4d a4 0f 30 0d a0 03   DENYDC.C
02 01 01 a1 06 30 04 1b  02 75 31 a5 82 03 7d 61   ·····0·· ·u1···}
82 03 79 30 82 03 75 a0  03 02 01 05 a1 0c 1b 0a   ··y0··u·
44 45 4e 59 44 43 2e 43  4f 4d a2 21 30 1f a0 03   DENYDC.C OM·!
02 01 02 a1 18 30 16 1b  04 48 54 54 50 1b 0e 66   ·····0··
63 34 2e 64 65 6e 79 44  43 2e 63 6f 6d a3 82 03   c4.denyD
3b 30 82 03 37 a0 03 02  01 17 a1 03 02 01 04 a2   ;0··7···
82 03 29 04 82 03 25 51  46 c6 81 d6 18 6d c4 95   ··)···%Q
19 f1 e4 97 91 f3 d3 f6  38 7f c0 25 96 2f 95 36   ········ 8··%·/
0d a1 cb 3b 6a 97 1a 7d  16 7e a8 fb 8c 0c e9 cd   ···;j··}
59 55 62 d3 25 b7 e7 13  95 9a 49 5f 6b fb d6 d5   YUb·%···
34 55 d6 97 b3 2b 6c da  42 e5 69 ec ae a1 cc ef   4U···+l·
ac 90 f7 c9 07 e4 c5 1a  dc fb ed 8d fa f5 f3 d6   ········
a9 43 27 d6 6e eb 12 83  f3 ea 66 14 e7 14 12 5f   ·C'·n···
36 62 b7 75 65 51 ca 76  e8 53 50 55 28 0e ff 2c   6b·ueQ·v</div>
<div class="sb d-flex flex-column justify-content-between" style="margin-right:1px">
<div><div class="sb-b d-flex align-items-center justify-content-center border-bottom"><svg width="8" height="4"><path d="M0 4 4 0 8 4Z" fill="#444"/></svg></div><div class="sb-b border-bottom" style="height:35px"></div></div>
<div class="sb-b d-flex align-items-center justify-content-center border-top"><svg width="8" height="4"><path d="M0 0h8L4 4Z" fill="#444"/></svg></div>
</div>
</div>

<div class="status d-flex align-items-center">
<svg style="margin-left:9px" width="16" height="16" viewBox="0 0 16 16"><circle cx="8" cy="8" r="6.700" fill="#82b1e6" stroke="#3d5f8c"/></svg>
<svg style="margin-left:8px" width="15" height="16" viewBox="0 0 15 16"><path d="M1 1h11v14H1z" fill="#f2f0e0" stroke="#bbb"/><path d="M1 1h8v4H1z" fill="#29a3dd"/><path d="M13.500 1.500 6 10" stroke="#333" stroke-width="2.200"/><path d="M3 12h6" stroke="#bbb"/></svg>
<span style="margin-left:15px;width:1225px">Kerberos: Protocol</span>
<span class="flex-grow-1">Packets: 26 · Displayed: 5 (19.2%)</span>
<i class="dotsep" style="margin-right:12px"></i><span style="width:94px;white-space:nowrap">Profile: Default</span>
</div>
</main>
<div class="frame-r"></div>
</div>

<footer class="vb-status d-flex align-items-center">
<div class="d-flex align-items-center" style="gap:3px;width:155px;padding-left:2px">
<svg width="16" height="16" viewBox="0 0 16 16"><rect x="1" y=".700" width="13" height="14.500" rx="1" fill="#3fa9ec" stroke="#1c6fc0"/><circle cx="7.800" cy="6.500" r="4.600" fill="#e8f6ff"/><circle cx="7.800" cy="6.500" r="2" fill="none" stroke="#2c8fe0" stroke-width="1.400"/><path d="M3 12.500h4L9 9" fill="none" stroke="#e8f6ff" stroke-width="1.300"/></svg>
<svg width="16" height="16" viewBox="0 0 16 16"><path d="M5.500 1.500h10v7h-10z" fill="#2ba7e8" stroke="#667"/><path d="M.700 6.500h9.500v6.500H.700z" fill="#18a0ee" stroke="#fff"/><path d="M.500 6h10v8H.500z" fill="none" stroke="#667" stroke-width=".8"/><path d="M4 15.500h5" stroke="#667"/></svg>
<svg width="16" height="16" viewBox="0 0 16 16"><path d="M.500 3.500h7l2-2h5l1 1V14.500H.500z" fill="#d6d6d6" stroke="#bdbdbd"/></svg>
<svg width="16" height="16" viewBox="0 0 16 16"><rect x=".700" y=".700" width="14.600" height="12.600" fill="#fff" stroke="#567"/><path d="M2.500 2.500h11v9h-11z" fill="#129aec"/><path d="M5 5h6v4H5z" fill="none" stroke="#fff"/><path d="M3 15h10" stroke="#567"/></svg>
<svg width="16" height="16" viewBox="0 0 16 16"><path d="M.500 5h11v9H.500z" fill="#148fe0" stroke="#566"/><path d="M6 1h9v7H6z" fill="#7892e4" stroke="#3747a8"/></svg>
<svg width="16" height="16" viewBox="0 0 16 16"><rect x="1" y="1" width="9.500" height="14" fill="#4a5cc0" stroke="#2b3a92" stroke-dasharray="1 1"/><path d="m3 4 2.700 7L8.500 4" fill="none" stroke="#fff" stroke-width="1.600"/><path d="M12.500 1h3v14h-3z" fill="#fff" stroke="#000"/></svg>
<svg width="16" height="16" viewBox="0 0 16 16"><circle cx="7.500" cy="8" r="7" fill="#58c2ee" stroke="#267fb5"/><path d="M7 4.500 9 3q5 1 4 5h2.500L10 15 6.500 12.500 9 10V7Z" fill="#8be02a" stroke="#387a10" stroke-width=".8"/></svg>
<svg width="16" height="16" viewBox="0 0 16 16"><rect x=".700" y=".700" width="14.600" height="14.600" rx="2" fill="#4fc0f5" stroke="#1d80c8"/><path d="M6 4h4v3.500h3L8 12 3 7.500h3z" fill="#123a70"/></svg>
</div>
<span class="flex-grow-1">Right Ctrl</span>
<svg width="11" height="16" viewBox="0 0 11 16"><path d="M9 6h1M6 9h4M3 12h7M0 15h10" stroke="#bbb" stroke-dasharray="1 2"/></svg>
</footer>
<script>
// unprintable bytes are shown as dimmed dots
const dump = document.getElementById('bytes');
dump.innerHTML = dump.innerHTML.replace(/·+/g, '<em>$&</em>');
</script>
</body>
</html>
